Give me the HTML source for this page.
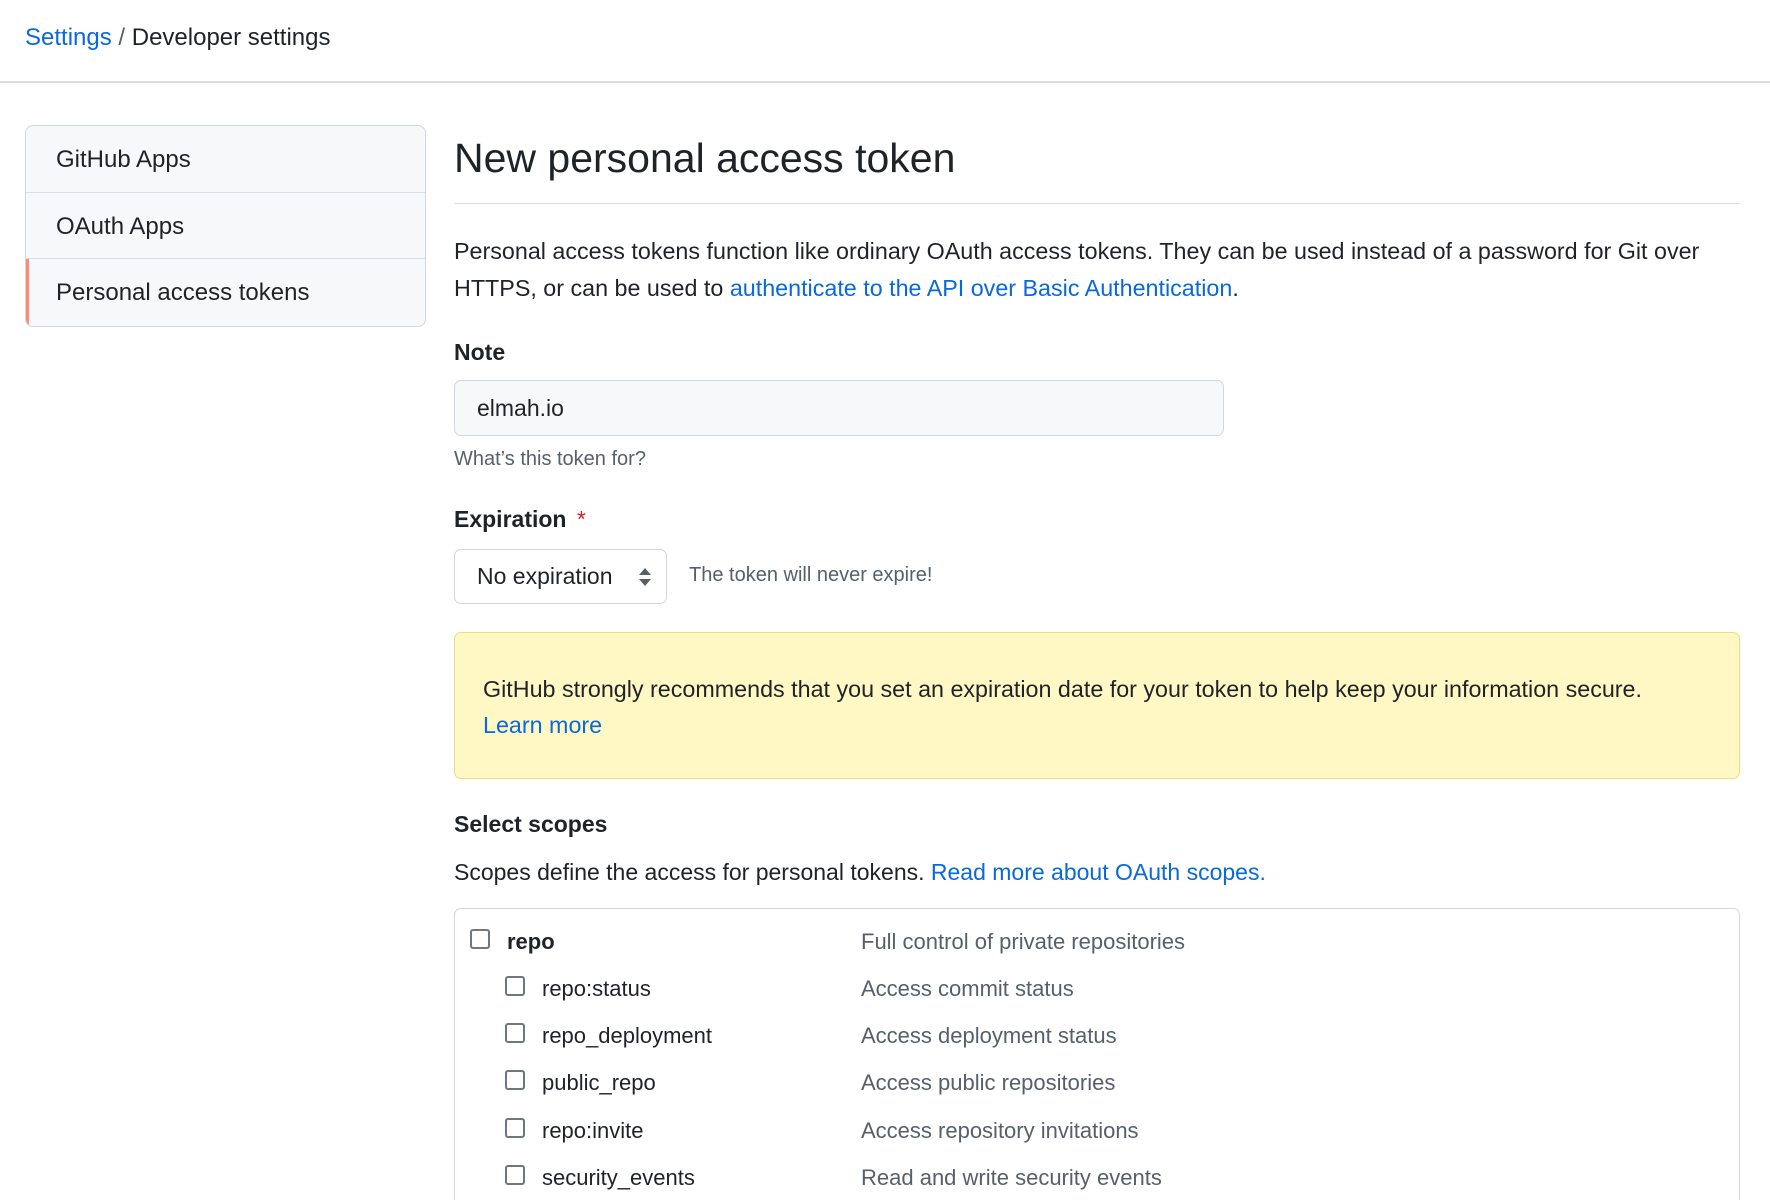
<!DOCTYPE html>
<html style="width:1770px;height:1200px;overflow:hidden"><head><meta charset="utf-8"><style>
*{box-sizing:border-box;margin:0;padding:0}
html,body{overflow:hidden}
body{width:1770px;height:1200px;overflow:hidden;background:#fff;font-family:"Liberation Sans",sans-serif;color:#1f2328;position:relative}
a{color:#0969da;text-decoration:none}
.abs{position:absolute;white-space:nowrap}
.hdr{position:absolute;left:0;top:0;width:1770px;height:83px;border-bottom:2px solid #d8dee4}
.side{position:absolute;left:25px;top:125px;width:401px;height:202px;border:1px solid #d0d7de;border-radius:8px;background:#f6f8fa;overflow:hidden}
.side div{height:66.6px;border-bottom:1px solid #d8dee4;font-size:24px;line-height:68px;padding-left:30px}
.side div:last-child{border-bottom:none;border-left:3px solid #fd8c73;padding-left:27px}
.cb{position:absolute;width:20px;height:20px;border:2px solid #6e7781;border-radius:3px;background:#fff}
.n{position:absolute;font-size:22px;white-space:nowrap;line-height:26px}
.d{position:absolute;left:861px;font-size:22px;color:#57606a;white-space:nowrap;line-height:26px}
</style></head><body>
<div class="hdr"></div>
<div class="abs" style="left:25px;top:23px;font-size:24px;line-height:30px"><a>Settings</a> <span style="color:#57606a">/</span> Developer settings</div>
<div class="side"><div>GitHub Apps</div><div>OAuth Apps</div><div>Personal access tokens</div></div>
<div class="abs" style="left:454px;top:134px;font-size:41px;line-height:48px">New personal access token</div>
<div class="abs" style="left:454px;top:203px;width:1286px;height:1px;background:#d8dee4"></div>
<div class="abs" style="left:454px;top:233px;width:1290px;font-size:23.3px;line-height:37px;white-space:normal">Personal access tokens function like ordinary OAuth access tokens. They can be used instead of a password for Git over HTTPS, or can be used to <a>authenticate to the API over Basic Authentication</a>.</div>
<div class="abs" style="left:454px;top:338px;font-size:23px;font-weight:bold;line-height:28px">Note</div>
<div class="abs" style="left:454px;top:380px;width:770px;height:56px;border:1px solid #d0d7de;border-radius:7px;background:#f6f8fa;font-size:23px;line-height:54px;padding-left:22px">elmah.io</div>
<div class="abs" style="left:454px;top:447px;font-size:20px;color:#57606a;line-height:24px">What’s this token for?</div>
<div class="abs" style="left:454px;top:505px;font-size:23px;font-weight:bold;line-height:28px">Expiration <span style="color:#cf222e;font-weight:normal;margin-left:4px">*</span></div>
<div class="abs" style="left:454px;top:549px;width:213px;height:55px;border:1px solid #d0d7de;border-radius:7px;background:#fff;font-size:23px;line-height:53px;padding-left:22px">No expiration
<svg style="position:absolute;left:183px;top:17px" width="14" height="20" viewBox="0 0 14 20"><path d="M7 1L13 8H1Z M7 19L13 12H1Z" fill="#57606a"/></svg></div>
<div class="abs" style="left:689px;top:563px;font-size:20px;color:#57606a;line-height:24px">The token will never expire!</div>
<div class="abs" style="left:454px;top:632px;width:1286px;height:147px;border:1px solid #eedc82;border-radius:7px;background:#fff8c5"></div>
<div class="abs" style="left:483px;top:671px;width:1190px;font-size:23.3px;line-height:36px;white-space:normal">GitHub strongly recommends that you set an expiration date for your token to help keep your information secure. <a>Learn more</a></div>
<div class="abs" style="left:454px;top:810px;font-size:23px;font-weight:bold;line-height:28px">Select scopes</div>
<div class="abs" style="left:454px;top:857px;font-size:23px;line-height:30px">Scopes define the access for personal tokens. <a>Read more about OAuth scopes.</a></div>
<div class="abs" style="left:454px;top:908px;width:1286px;height:292px;border:1px solid #d0d7de;border-bottom:none;border-radius:7px 7px 0 0"></div>
<div class="cb" style="left:470px;top:929px"></div><div class="n" style="left:507px;top:929px;font-weight:bold">repo</div><div class="d" style="top:929px">Full control of private repositories</div>
<div class="cb" style="left:505px;top:976px"></div><div class="n" style="left:542px;top:976px">repo:status</div><div class="d" style="top:976px">Access commit status</div>
<div class="cb" style="left:505px;top:1023px"></div><div class="n" style="left:542px;top:1023px">repo_deployment</div><div class="d" style="top:1023px">Access deployment status</div>
<div class="cb" style="left:505px;top:1070px"></div><div class="n" style="left:542px;top:1070px">public_repo</div><div class="d" style="top:1070px">Access public repositories</div>
<div class="cb" style="left:505px;top:1118px"></div><div class="n" style="left:542px;top:1118px">repo:invite</div><div class="d" style="top:1118px">Access repository invitations</div>
<div class="cb" style="left:505px;top:1165px"></div><div class="n" style="left:542px;top:1165px">security_events</div><div class="d" style="top:1165px">Read and write security events</div>
</body></html>
